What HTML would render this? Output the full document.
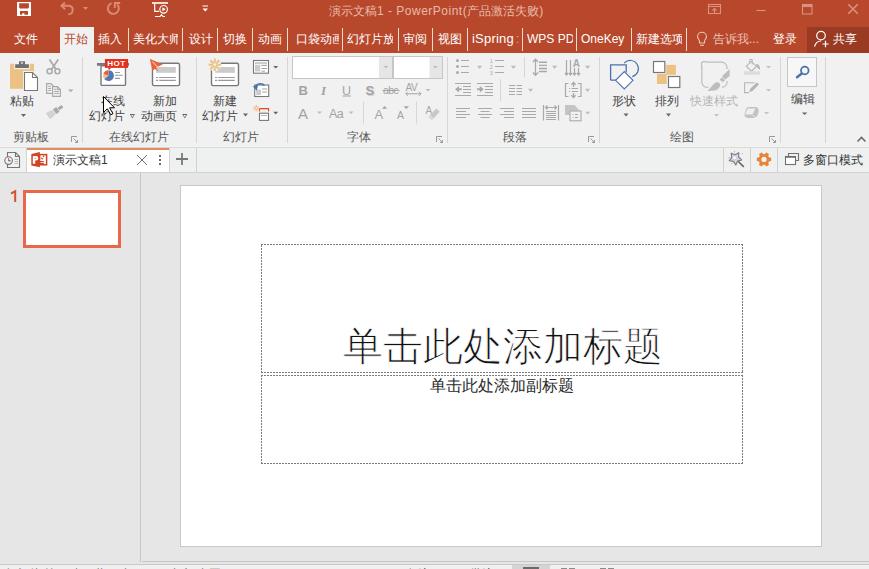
<!DOCTYPE html>
<html><head><meta charset="utf-8">
<style>
*{margin:0;padding:0;box-sizing:border-box}
html,body{width:869px;height:569px;overflow:hidden}
body{position:relative;background:#E6E6E6;font-family:"Liberation Sans",sans-serif;font-size:12px;line-height:16px;color:#444}
.a{position:absolute}
.t{position:absolute;white-space:nowrap;font-size:12px;line-height:16px}
.w{color:#fff}
.sep{position:absolute;width:1px;background:#D5D5D5}
.tsep{position:absolute;width:1px;top:28px;height:23px;background:#F0DBD3}
svg{position:absolute;overflow:visible}
</style></head><body>

<!-- ===== title bar + tabs ===== -->
<div class="a" style="left:0;top:0;width:869px;height:53px;background:#B8482C"></div>
<div class="a" style="left:60px;top:27px;width:34px;height:26px;background:#F1F1F1"></div>
<div class="a" style="left:807px;top:27px;width:62px;height:26px;background:#9B3A22"></div>

<div class="t" style="left:329px;top:3px;color:#E8BBAA">演示文稿<span style="letter-spacing:0.5px">1 - PowerPoint(</span>产品激活失败)</div>

<div class="t w" style="left:14px;top:31px">文件</div>
<div class="t" style="left:64px;top:31px;color:#B7472A">开始</div>
<div class="t w" style="left:98px;top:31px">插入</div>
<div class="tsep" style="left:128px"></div>
<div class="t w" style="left:133px;top:31px;width:45px;overflow:hidden">美化大师</div>
<div class="tsep" style="left:182px"></div>
<div class="t w" style="left:189px;top:31px">设计</div>
<div class="tsep" style="left:217px"></div>
<div class="t w" style="left:223px;top:31px">切换</div>
<div class="tsep" style="left:252px"></div>
<div class="t w" style="left:258px;top:31px">动画</div>
<div class="tsep" style="left:287px"></div>
<div class="t w" style="left:296px;top:31px;width:43px;overflow:hidden">口袋动画</div>
<div class="tsep" style="left:342px"></div>
<div class="t w" style="left:347px;top:31px;width:46px;overflow:hidden">幻灯片放映</div>
<div class="tsep" style="left:398px"></div>
<div class="t w" style="left:403px;top:31px">审阅</div>
<div class="tsep" style="left:432px"></div>
<div class="t w" style="left:438px;top:31px">视图</div>
<div class="tsep" style="left:467px"></div>
<div class="t w" style="left:472px;top:31px;font-size:13px;letter-spacing:0.2px">iSpring</div><div class="t" style="left:516px;top:31px;color:#E0A898">:</div>
<div class="tsep" style="left:522px"></div>
<div class="t w" style="left:527px;top:31px;width:46px;overflow:hidden">WPS PDF</div>
<div class="tsep" style="left:576px"></div>
<div class="t w" style="left:581px;top:31px">OneKey</div>
<div class="tsep" style="left:631px"></div>
<div class="t w" style="left:636px;top:31px;width:46px;overflow:hidden">新建选项卡</div>
<div class="tsep" style="left:686px"></div>
<div class="t" style="left:713px;top:31px;color:#EBC3B6">告诉我...</div>
<div class="t w" style="left:773px;top:31px">登录</div>
<div class="t w" style="left:833px;top:31px">共享</div>

<!-- ===== ribbon ===== -->
<div class="a" style="left:0;top:53px;width:869px;height:95px;background:#F1F1F1;border-bottom:1px solid #DADADA"></div>

<div class="sep" style="left:82px;top:57px;height:86px"></div>
<div class="sep" style="left:196px;top:57px;height:86px"></div>
<div class="sep" style="left:287px;top:57px;height:86px"></div>
<div class="sep" style="left:447px;top:57px;height:86px"></div>
<div class="sep" style="left:599px;top:57px;height:86px"></div>
<div class="sep" style="left:780px;top:57px;height:86px"></div>
<div class="sep" style="left:825px;top:57px;height:86px"></div>

<!-- group labels -->
<div class="t" style="left:13px;top:129px;color:#585858">剪贴板</div>
<div class="t" style="left:109px;top:129px;color:#585858">在线幻灯片</div>
<div class="t" style="left:223px;top:129px;color:#585858">幻灯片</div>
<div class="t" style="left:347px;top:129px;color:#585858">字体</div>
<div class="t" style="left:503px;top:129px;color:#585858">段落</div>
<div class="t" style="left:670px;top:129px;color:#585858">绘图</div>

<!-- big button labels -->
<div class="t" style="left:10px;top:93px">粘贴</div>
<div class="t" style="left:101px;top:93px">在线</div>
<div class="t" style="left:89px;top:108px">幻灯片</div>
<div class="t" style="left:153px;top:93px">新加</div>
<div class="t" style="left:141px;top:108px">动画页</div>
<div class="t" style="left:213px;top:93px">新建</div>
<div class="t" style="left:202px;top:108px">幻灯片</div>
<div class="t" style="left:612px;top:93px">形状</div>
<div class="t" style="left:655px;top:93px">排列</div>
<div class="t" style="left:690px;top:93px;color:#B5B5B5">快速样式</div>
<div class="t" style="left:791px;top:91px">编辑</div>

<!-- ===== doc tab bar ===== -->
<div class="a" style="left:0;top:148px;width:869px;height:25px;background:#EFF0F0;border-bottom:1px solid #D2D2D2"></div>
<div class="a" style="left:26px;top:148px;width:1px;height:24px;background:#D2D2D2"></div>
<div class="a" style="left:27px;top:148px;width:142px;height:24px;background:#fff;border-top:2px solid #E48A5F"></div>
<div class="a" style="left:169px;top:148px;width:1px;height:24px;background:#D2D2D2"></div>
<div class="a" style="left:196px;top:148px;width:1px;height:24px;background:#D2D2D2"></div>
<div class="t" style="left:53px;top:152px;color:#333">演示文稿1</div>
<div class="a" style="left:723px;top:148px;width:1px;height:24px;background:#D2D2D2"></div>
<div class="a" style="left:750px;top:148px;width:1px;height:24px;background:#D2D2D2"></div>
<div class="a" style="left:777px;top:148px;width:1px;height:24px;background:#D2D2D2"></div>
<div class="t" style="left:803px;top:152px;color:#333">多窗口模式</div>

<!-- ===== main area ===== -->
<div class="a" style="left:140px;top:173px;width:1px;height:389px;background:#C6C6C6"></div>
<div class="a" style="left:142px;top:561px;width:727px;height:1px;background:#C6C6C6"></div>
<svg style="left:0;top:180px" width="30" height="30"><path d="M11 13.6L15.2 11.2V22" fill="none" stroke="#D4502F" stroke-width="2"/></svg>
<div class="a" style="left:23px;top:190px;width:98px;height:58px;background:#fff;border:3px solid #E7694A"></div>

<div class="a" style="left:180px;top:185px;width:642px;height:362px;background:#fff;border:1px solid #C8C8C8"></div>
<svg style="left:0;top:0" width="869" height="569"><g fill="none" stroke="#7A7A7A" stroke-width="1" stroke-dasharray="2 1">
<path d="M261 244.5H743M742.5 244V373M743 372.5H261M261.5 373V244"/>
<path d="M261 375.5H743M742.5 375V464M743 463.5H261M261.5 464V375"/></g></svg>
<div class="t" style="left:343px;top:321px;font-size:40px;line-height:50px;color:#111;-webkit-text-stroke:0.9px #fff">单击此处添加标题</div>
<div class="t" style="left:430px;top:376px;font-size:16px;line-height:20px;color:#2A2A2A">单击此处添加副标题</div>


<!-- ===== icon layer ===== -->
<svg style="left:0;top:0" width="869" height="569" viewBox="0 0 869 569">
<!-- QAT -->
<path fill="#fff" fill-rule="evenodd" d="M17 2H31V16H17Z M19.2 3.2H28.9V7.8L28.1 8.6H20L19.2 7.8Z M20 11H28V14.7H24.4V13.3H22.2V14.7H20Z"/>
<g fill="none" stroke="#D98B76" stroke-width="1.9">
<path d="M61 5.8H69.3A4.3 4.3 0 0 1 68.3 14.3"/>
<path d="M65 2.5L61.4 5.8L65 9.2"/>
<path d="M111.6 3.2A5.5 5.5 0 1 0 117.3 4.5"/>
<path d="M114.8 8V3H120.2"/>
</g>
<path fill="#D98B76" d="M83 7H88L85.5 9.9Z"/>
<g fill="none" stroke="#fff" stroke-width="1.2">
<path d="M152 3H168" stroke-width="1.6"/>
<path d="M154.7 3.5V11.3H159"/>
<circle cx="163.6" cy="9.3" r="3.8"/>
<path d="M155 16.5H160L161.5 14.6L163 16.5H165"/>
</g>
<path fill="#fff" d="M162.4 7.3L165.7 9.3L162.4 11.3Z"/>
<path fill="#fff" d="M202.5 5.5H208V6.6H202.5Z M202.5 8.4H208L205.25 11.5Z"/>
<!-- window buttons -->
<g fill="none" stroke="#D99180" stroke-width="1.1">
<rect x="708.5" y="4.5" width="12" height="9"/>
<path d="M709 6.5H720 M714.5 13V8.5 M712.5 10.5L714.5 8.5L716.5 10.5"/>
<path d="M756.5 10.5H765.5"/>
<rect x="802.5" y="4.5" width="9.5" height="9.5"/>
<path d="M802.5 5.8H812" stroke-width="2.5"/>
<path d="M848.3 4.3L857.7 13.7M857.7 4.3L848.3 13.7" stroke-width="1.6"/>
</g>
<!-- tell me bulb -->
<g fill="none" stroke="#F0C4B6" stroke-width="1.1">
<path d="M699.5 43V41.5C699.5 39.5 697.5 38.5 697.5 36.7A4.5 4.5 0 0 1 706.5 36.7C706.5 38.5 704.5 39.5 704.5 41.5V43Z"/>
<path d="M700 45.3H704"/>
</g>
<!-- share user -->
<g fill="none" stroke="#fff" stroke-width="1.2">
<circle cx="821" cy="35.6" r="4.3"/>
<path d="M814.5 46.7C815.5 42.8 818 41 821 41"/>
<path d="M822.5 44H828.6M825.5 40.8V47.2"/>
</g>

<!-- ===== clipboard group ===== -->
<rect x="10" y="63.8" width="24" height="25" fill="#EBC283"/>
<path d="M14.2 63H29.8V69.2H14.2Z" fill="#F1F1F1"/>
<path d="M15.2 64.2H28.9V68H15.2Z M19 61.2H25V64.5H19Z" fill="#707070"/>
<circle cx="22" cy="63" r="0.9" fill="#F1F1F1"/>
<path d="M23 71H33L39 77V92H23Z" fill="#F1F1F1"/>
<path d="M24.5 72.5H32.5L37.5 77.5V90.5H24.5Z" fill="#fff" stroke="#777" stroke-width="1.1"/>
<path d="M32.5 72.5V77.5H37.5" fill="none" stroke="#777" stroke-width="1.1"/>
<g fill="none" stroke="#A9A9A9" stroke-width="1.3">
<path d="M49.5 59.5L56 69.2M58.2 59.5L51.7 69.2" stroke-width="1.7"/>
<circle cx="49.6" cy="71.3" r="2.5" stroke-width="1.5"/>
<circle cx="57.4" cy="71.3" r="2.5" stroke-width="1.5"/>
<path d="M46.6 83.6H51L53 85.6V93.4H46.6Z" fill="#F1F1F1" stroke-width="1.2"/>
<path d="M52.6 86.6H57.5L60.4 89.5V96.4H52.6Z" fill="#F1F1F1" stroke-width="1.2"/>
<path d="M48.2 86.3H51M48.2 88.5H51M48.2 90.5H51M54.2 89.3H56.5M54.2 91.4H59M54.2 93.4H59" stroke-width="1"/>
<path d="M57.5 86.6V89.5H60.4" stroke-width="1"/>
</g>
<path d="M68 89.5H73.5L70.75 92.3Z" fill="#A9A9A9"/>
<path d="M59.3 110.2L63.3 107.4L61.7 105.0L57.6 107.7Z" fill="#A9A9A9"/>
<path d="M56.2 113.9L59.5 111.7L56.3 107.1L53.0 109.3Z" fill="#A9A9A9"/>
<path d="M50.0 119.3L55.7 114.2L52.5 109.7L45.8 113.1Z" fill="#D2D2D2"/>
<path d="M21 114H26L23.5 117Z" fill="#666"/>
<!-- launcher -->
<g fill="none" stroke="#9A9A9A" stroke-width="1">
<path d="M71.5 142V136.5H77M73.5 138.5L77.5 142.5M75 142.5H77.5V140"/>
<path d="M436.5 142V136.5H442M438.5 138.5L442.5 142.5M440 142.5H442.5V140"/>
<path d="M588.5 142V136.5H594M590.5 138.5L594.5 142.5M592 142.5H594.5V140"/>
<path d="M769.5 142V136.5H775M771.5 138.5L775.5 142.5M773 142.5H775.5V140"/>
</g>
<!-- collapse -->
<path d="M857.5 141.5L861.5 137.5L865.5 141.5" fill="none" stroke="#6A6A6A" stroke-width="1.6"/>

<!-- ===== online slides ===== -->
<rect x="97" y="63" width="32" height="2.8" fill="#7A7A7A"/>
<rect x="101" y="65.8" width="24.5" height="19.6" rx="1" fill="#fff" stroke="#787878" stroke-width="1.4"/>
<rect x="104.9" y="59" width="23.2" height="8.9" fill="#E2321D"/>
<path d="M108 67.9H111L109 70Z" fill="#E2321D"/>
<text x="116.5" y="66.4" font-family="Liberation Sans" font-weight="bold" font-size="8" fill="#fff" text-anchor="middle" letter-spacing="0.6">HOT</text>
<path d="M108.5 75.6L108.5 70.2A5.4 5.4 0 1 1 104.3 79Z" fill="#5079B2"/>
<path d="M108.5 75.6L104.3 79A5.4 5.4 0 0 1 103.3 74.1Z" fill="#EBC283"/>
<path d="M108.5 75.6L103.3 74.1A5.4 5.4 0 0 1 108.5 70.2Z" fill="#D9634A"/>
<path d="M115 72.5H120M115 75.3H122.8M115 78.4H120" stroke="#9A9A9A" stroke-width="1.1"/>
<!-- new animation page -->
<rect x="152.5" y="63.3" width="27" height="22.3" rx="1.6" fill="#fff" stroke="#787878" stroke-width="1.4"/>
<rect x="156" y="67" width="19.8" height="5.8" fill="#CBCBCB"/>
<path d="M156 77.5H158.2M159.3 77.5H175.8M156 80.4H158.2M159.3 80.4H175.8" stroke="#9A9A9A" stroke-width="1.1"/>
<path d="M149.8 58.8L162.8 64.5L156 67.5L158.6 71.6L155 69L152.4 70.6Z" fill="#E8643C"/>
<path d="M152.3 61.5L157.5 67" stroke="#fff" stroke-width="0.8"/>
<!-- new slide -->
<rect x="211.5" y="63.3" width="27" height="22.3" rx="1.6" fill="#fff" stroke="#787878" stroke-width="1.4"/>
<rect x="215.2" y="67" width="19.6" height="5.8" fill="#CBCBCB"/>
<path d="M215 77.5H217.2M218.2 77.5H234.8M215 80.4H217.2M218.2 80.4H234.8" stroke="#9A9A9A" stroke-width="1.1"/>
<circle cx="214.8" cy="64.8" r="6.5" fill="#F1F1F1"/>
<g stroke="#EBC283" stroke-width="2">
<path d="M214.8 58.5V62.2M214.8 67.4V71.1M208.5 64.8H212.2M217.4 64.8H221.1M210.3 60.3L212.9 62.9M216.7 66.7L219.3 69.3M219.3 60.3L216.7 62.9M212.9 66.7L210.3 69.3"/>
</g>
<circle cx="214.8" cy="64.8" r="2.1" fill="none" stroke="#EBC283" stroke-width="1.3"/>
<!-- layout/reset/section -->
<rect x="253.5" y="60.5" width="15" height="12.7" fill="#fff" stroke="#787878" stroke-width="1.1"/>
<path d="M255 62H267V64.2H255Z M255 65H260.3V71.6H255Z" fill="#CBCBCB"/>
<path d="M261.5 65.5H267M261.5 68.5H267M261.5 71.2H265" stroke="#9A9A9A" stroke-width="0.9"/>
<path d="M273.2 66H278.2L275.7 68.6Z" fill="#666"/>
<rect x="254.7" y="85" width="14" height="11.5" fill="#fff" stroke="#787878" stroke-width="1.1"/>
<path d="M256.2 89.5H261V95H256.2Z" fill="#CBCBCB"/>
<path d="M262 89H267.2M262 92H267.2" stroke="#9A9A9A" stroke-width="0.9"/>
<path d="M255.5 88.5A5 4.5 0 0 1 264.5 85.6" fill="none" stroke="#4A72AC" stroke-width="1.6"/>
<path d="M252.8 86.3L256.8 90.8L258 85.4Z" fill="#4A72AC"/>
<rect x="259.5" y="113.2" width="9" height="7.2" fill="#fff" stroke="#787878" stroke-width="1.1"/>
<path d="M261 115.5H267" stroke="#BBB" stroke-width="1"/>
<path d="M259.5 111.6V108.6H268.6V111.6" fill="none" stroke="#E2491F" stroke-width="1.1"/>
<g stroke="#EBC283" stroke-width="1"><path d="M256.3 104.8V111.6M252.9 108.2H259.7M254 105.9L258.6 110.5M258.6 105.9L254 110.5"/></g>
<circle cx="256.3" cy="108.2" r="1.3" fill="#F1F1F1" stroke="#EBC283" stroke-width="0.9"/>
<path d="M273.2 111.8H278.2L275.7 114.4Z" fill="#666"/>
<!-- big button dropdown arrows -->
<path d="M621.5 113.5H630.5L626 117.2Z" transform="translate(0,0) scale(1)" fill="#666" style="display:none"/>
</svg>


<svg style="left:0;top:0" width="869" height="569" viewBox="0 0 869 569">
<!-- dropdown arrows big buttons -->
<g fill="#666">
<path d="M129.8 114H135L132.4 118.5Z"/>
<path d="M182.2 114H187.4L184.8 118.5Z"/>
<path d="M243 113.5H248L245.5 116.5Z"/>
<path d="M623.5 113.5H628.5L626 116.5Z"/>
<path d="M666 113.5H671L668.5 116.5Z"/>
<path d="M802 112.5H807.3L804.65 115Z"/>
</g>
<path d="M131.2 115H133.6L132.4 117.2Z" fill="#F1F1F1"/>
<path d="M183.6 115H186L184.8 117.2Z" fill="#F1F1F1"/>
<path d="M714 114H719L716.5 116.8Z" fill="#C4C4C4"/>

<!-- ===== font group ===== -->
<rect x="292.5" y="56.5" width="100" height="22" fill="#fff" stroke="#C6C6C6"/>
<rect x="379" y="57" width="13" height="21" fill="#E6E6E6"/>
<rect x="393.5" y="56.5" width="49" height="22" fill="#fff" stroke="#C6C6C6"/>
<rect x="429.5" y="57" width="12.5" height="21" fill="#E6E6E6"/>
<path d="M383.5 66H388.2L385.85 68.6Z M433 66H437.7L435.35 68.6Z" fill="#BEBEBE"/>
<g fill="#A3A3A3" font-family="Liberation Sans">
<text x="298.5" y="94.5" font-size="13" font-weight="bold">B</text>
<text x="321" y="94.5" font-size="13" font-style="italic" font-weight="bold" font-family="Liberation Serif">I</text>
<text x="342" y="94.5" font-size="12.5">U</text>
<text x="366.5" y="95.5" font-size="13" font-weight="bold" fill="#D0D0D0">S</text><text x="365.5" y="94.5" font-size="13" font-weight="bold">S</text>
<text x="383" y="94" font-size="10.5" letter-spacing="-0.6">abc</text>
<text x="405.5" y="91" font-size="10" letter-spacing="-0.4">AV</text>
<text x="298" y="118.5" font-size="15">A</text>
<text x="329" y="117.5" font-size="12.5" letter-spacing="-0.5">Aa</text>
<text x="374.5" y="118.5" font-size="13">A</text>
<text x="397" y="119" font-size="10.5">A</text>
</g>
<path d="M342.5 96H351" stroke="#A3A3A3" stroke-width="1"/>
<path d="M382.5 90.5H399.5" stroke="#A3A3A3" stroke-width="1"/>
<path d="M405.8 93.8H421M407.8 91.8L405.8 93.8L407.8 95.8M419 91.8L421 93.8L419 95.8" fill="none" stroke="#A3A3A3" stroke-width="1"/>
<g fill="#BDBDBD">
<path d="M425.5 89H430.5L428 91.5Z"/>
<path d="M317 111.5H322L319.5 114Z"/>
<path d="M348.5 111.5H353.5L351 114Z"/>
<path d="M382 108.7L384.6 106L387.2 108.7Z" fill="#A3A3A3"/>
<path d="M403.6 106.3L409 106.3L406.3 109Z" fill="#A3A3A3"/>
</g>
<path d="M363.5 102V123.5M416.5 102V123.5" stroke="#D5D5D5" stroke-width="1"/>
<text x="425.6" y="113.8" font-size="10" fill="#A8A8A8" font-family="Liberation Sans">A</text>
<path d="M430 115L436.3 108.4L439.8 111.8L433.5 118.4Z" fill="#C8C8C8"/>
<path d="M428.4 116.8L430 115.2L433.4 118.6L431.8 120.2Z" fill="#D6D6D6"/>

<!-- ===== paragraph group ===== -->
<g fill="#A9A9A9">
<circle cx="457.5" cy="60.5" r="1.5"/><circle cx="457.5" cy="66.5" r="1.5"/><circle cx="457.5" cy="72.5" r="1.5"/>
</g>
<g stroke="#A9A9A9" stroke-width="1.2" fill="none">
<path d="M461 60.5H469M461 66.5H469M461 72.5H469"/>
<path d="M495 60.5H504M495 66.5H504M495 72.5H504"/>
<path d="M535.5 59.5V75" />
<path d="M533 62L535.5 59.3L538 62M533 72.5L535.5 75.2L538 72.5" stroke-width="1.4"/>
<path d="M539 62.3H547M539 65.4H547M539 68.5H547M539 71.5H547" stroke-width="1.4"/>
<path d="M566.5 60V75M570.5 60V75M574.5 68V75M578.5 68V75"/>
<path d="M565 73L566.5 75L568 73M569 73L570.5 75L572 73M573 73L574.5 75L576 73M577 73L578.5 75L580 73" stroke-width="1.3"/>
<path d="M455 83.5H471M463 86.5H471M463 89.5H471M463 92.5H471M455 95.5H471"/>
<path d="M477 83.5H493M485 86.5H493M485 89.5H493M485 92.5H493M477 95.5H493"/>
<path d="M509 85.5H515M516.5 85.5H522M509 88.5H515M516.5 88.5H522M509 91.5H515M516.5 91.5H522M509 94.5H515M516.5 94.5H522"/>
<path d="M568.5 83.5H565.5V96.5H568.5M578 83.5H581V96.5H578"/>
<path d="M573.5 82.5V87M571.3 84.7L573.5 82.5L575.7 84.7M573.5 93V97.5M571.3 95.3L573.5 97.5L575.7 95.3" stroke-width="1.3"/>
<path d="M569 88.5H570M571.5 88.5H578M569 91.5H570M571.5 91.5H578"/>
<path d="M456 108.5H470M456 111.5H466M456 114.5H470M456 117.5H466"/>
<path d="M478 108.5H492M480.5 111.5H489.5M478 114.5H492M480.5 117.5H489.5"/>
<path d="M500 108.5H514M504 111.5H514M500 114.5H514M504 117.5H514"/>
<path d="M522 108.5H536M522 111.5H536M522 114.5H536M522 117.5H536"/>
<path d="M543.5 105V120.5M558.5 105V120.5M546 111.5H556M546 113.5H556M546 115.5H556M546 117.5H556M546 119.5H556"/>
<path d="M545.5 107.5H556.5M547.5 105.5L545.5 107.5L547.5 109.5M554.5 105.5L556.5 107.5L554.5 109.5"/>
</g>
<path d="M455 89.2L459 86V88.2H461.7V90.2H459V92.4Z" fill="#A9A9A9"/>
<path d="M483.8 89.2L479.8 86V88.2H477.1V90.2H479.8V92.4Z" fill="#A9A9A9"/>
<text x="489.7" y="63" font-size="5.5" fill="#A9A9A9" font-family="Liberation Sans">1</text>
<text x="489.7" y="69" font-size="5.5" fill="#A9A9A9" font-family="Liberation Sans">2</text>
<text x="489.7" y="75" font-size="5.5" fill="#A9A9A9" font-family="Liberation Sans">3</text>
<text x="572.8" y="66.8" font-size="10" font-weight="bold" fill="#A9A9A9" font-family="Liberation Sans">A</text>
<path d="M524.5 57V77.5M500.5 79V101" stroke="#D5D5D5" stroke-width="1"/>
<path d="M565 105H574.5L579.7 110.8H569.7V115H565Z" fill="#C4C4C4"/>
<rect x="570" y="111" width="11" height="9.8" fill="#F1F1F1" stroke="#A9A9A9" stroke-width="1.1"/>
<path d="M572.5 114.5H573.5M572.5 117.5H573.5M575 114.5H578M575 117.5H578" stroke="#A9A9A9" stroke-width="1"/>
<g fill="#BDBDBD">
<path d="M477 65.7H482.2L479.6 68.9Z"/><path d="M510.8 65.7H516L513.4 68.9Z"/>
<path d="M552 65.7H557.2L554.6 68.9Z"/><path d="M585 65.7H590.2L587.6 68.9Z"/>
<path d="M528 88.8H533.2L530.6 92Z"/><path d="M585 88.8H590.2L587.6 92Z"/>
<path d="M585.2 111.8H590.2L587.7 114.6Z"/>
</g>

<!-- ===== drawing group ===== -->
<path d="M624.2 63.1A8.2 8.2 0 1 1 632.3 76.6" fill="none" stroke="#4A72AC" stroke-width="1.2"/>
<path d="M610.6 80.2V64.8H626.2V72.5M610.6 80.2H616.5" fill="none" stroke="#4A72AC" stroke-width="1.3"/>
<path d="M624.3 71.6L633 80.3L624.3 89L615.6 80.3Z" fill="#fff" stroke="#4A72AC" stroke-width="1.1"/>
<rect x="666.2" y="64.9" width="9.7" height="9.9" fill="#EBC283"/>
<rect x="657" y="73.9" width="9.7" height="10.1" fill="#EBC283"/>
<rect x="653.5" y="61.5" width="11.3" height="11" fill="#fff" stroke="#777" stroke-width="1.2"/>
<rect x="668.5" y="76.5" width="11.3" height="11" fill="#fff" stroke="#777" stroke-width="1.2"/>
<path d="M701.6 68.5V62.5A5.5 5.5 0 0 1 707 62.2H721.5A5.5 5.5 0 0 1 727 67.7V69" fill="none" stroke="#BDBDBD" stroke-width="1.2"/>
<path d="M701.8 67V82A5.5 5.5 0 0 0 707.3 87.4H708.3M722 87.4A5.5 5.5 0 0 0 727 82V81" fill="none" stroke="#BDBDBD" stroke-width="1.2"/>
<path d="M701.8 67V62.5" stroke="#F1F1F1" stroke-width="0"/>
<path d="M729.6 69V76L725.2 79.6L722 76.2Z" fill="#BDBDBD"/>
<path d="M722 77.3L725 79.9L723 82.3L719.6 79.8Z" fill="#BDBDBD"/>
<path d="M707.5 90.9L714.5 83.3C716.4 81.7 719.5 82 720.2 84.6C720.5 86.5 718.3 89.6 715.1 90.6Z" fill="#BDBDBD"/>
<path d="M746.3 66.2L751.3 61.4L756.5 66.4L751.4 71.2Z" fill="#F1F1F1" stroke="#B5B5B5" stroke-width="1.1"/>
<path d="M749.8 63V59.5H752.2V64.5" fill="none" stroke="#B5B5B5" stroke-width="1"/>
<path d="M756 64C758.5 64 760.3 66 760 69.8L757.5 68Z" fill="#B5B5B5"/>
<rect x="744.1" y="71.3" width="15.9" height="3.5" fill="#DCDCDC"/>
<path d="M754.5 82.8H744.6V92.6H749" fill="none" stroke="#B5B5B5" stroke-width="1.1"/>
<path d="M749.2 92.2L750.3 88.8L756.8 82.3L759 84.5L752.5 91Z" fill="#B5B5B5"/>
<path d="M744.6 113.5C744 115.5 745 117.9 748 117.9H753.5C755.5 117.9 756.8 116.8 757.8 114.5L758.5 112C759 109.5 758 107.1 755.5 107.1H749C747.3 107.1 746.5 108 746 109.2Z" fill="#C2C2C2"/>
<path d="M747.6 108.4H755.4L752.5 114.6H745Z" fill="#EFEFEF"/>
<path d="M752.6 114.8L755.2 117.6" stroke="#F4F4F4" stroke-width="0.8"/>
<g fill="#C4C4C4">
<path d="M765.9 66H771.2L768.55 68.6Z"/><path d="M765.9 89H771.2L768.55 91.6Z"/><path d="M764 112H769.2L766.6 114.5Z"/>
</g>
<!-- edit -->
<rect x="787.5" y="57.5" width="29" height="29" fill="#F7F7F7" stroke="#C6C6C6"/>
<circle cx="804.8" cy="70.5" r="3.8" fill="none" stroke="#4A72AC" stroke-width="1.8"/>
<path d="M801.8 73.5L797 77.3" stroke="#4A72AC" stroke-width="2.4" stroke-linecap="round"/>

<!-- ===== doc tab bar icons ===== -->
<path d="M7.5 152.5H15.5L19.5 156.5V167.5H7.5Z" fill="#F1F2F2" stroke="#757575" stroke-width="1.1"/>
<path d="M15.5 152.5V156.5H19.5" fill="none" stroke="#757575" stroke-width="1.1"/>
<path d="M14.5 159.5H18M14.5 161.5H18M14.5 163.5H18" stroke="#AAA" stroke-width="0.8"/>
<circle cx="8.6" cy="160.6" r="3.8" fill="#F1F2F2" stroke="#757575" stroke-width="1.1"/>
<path d="M8.6 158V160.8H10.5" fill="none" stroke="#D9452B" stroke-width="0.9"/>
<path d="M8.6 160.8H10.5" stroke="#3A6FC4" stroke-width="0.9"/>
<rect x="39.6" y="154.6" width="7" height="10.2" fill="#fff" stroke="#D04423" stroke-width="1.5"/>
<path d="M31.3 153.9L39.9 152.1V167.2L31.3 165.5Z" fill="#D04423"/>
<path d="M32.8 163.8V156H36A2.3 2.3 0 0 1 36 160.6H35.2V163.8Z" fill="#fff"/>
<path d="M34.8 157.9H35.8A0.8 0.8 0 0 1 35.8 158.8H34.8Z" fill="#D04423"/>
<path d="M39.8 161.5H43.8M39.8 163.4H43.8" stroke="#D04423" stroke-width="1.1"/>
<path d="M40.5 157.3L43.5 158.4L42 159.8Z" fill="#D04423"/>
<circle cx="43.6" cy="156.4" r="0.8" fill="#D04423"/>
<path d="M137 155L147 165M147 155L137 165" stroke="#707070" stroke-width="1"/>
<rect x="159" y="155" width="2" height="2" fill="#666"/><rect x="159" y="159" width="2" height="2" fill="#666"/><rect x="159" y="163" width="2" height="2" fill="#666"/>
<path d="M176 159H188M182 153V165" stroke="#777" stroke-width="1.8"/>
<!-- wand -->
<path d="M738.8 152.7L738.6 157.0L741.7 159.9L737.6 161.1L735.8 164.9L733.4 161.4L729.2 160.8L731.8 157.4L731.1 153.2L735.0 154.7Z" fill="#D8D1E3" stroke="#7C7C7C" stroke-width="1.1" stroke-linejoin="round"/>
<path d="M738.3 161.5L743.8 166.8" stroke="#6A6A6A" stroke-width="1.7"/>
<circle cx="734.5" cy="157.8" r="1.3" fill="#fff"/>
<path d="M734.4 151.2V152.4M741.5 154.2L742.5 153.2M728.5 157.7H729.6M731.5 163.7L732.5 163.3" stroke="#8A8A8A" stroke-width="0.8"/>
<!-- gear -->
<g fill="#E8843A">
<circle cx="764" cy="159.4" r="5.4"/>
<rect x="756.8" y="157.6" width="14.4" height="3.6" rx="0.8"/>
<rect x="756.8" y="157.6" width="14.4" height="3.6" rx="0.8" transform="rotate(60 764 159.4)"/>
<rect x="756.8" y="157.6" width="14.4" height="3.6" rx="0.8" transform="rotate(120 764 159.4)"/>
</g>
<circle cx="764" cy="159.4" r="2.6" fill="#F0F1F1"/>
<!-- window -->
<path d="M788.5 156V153.5H798.5V160.5H796" fill="#F1F2F2" stroke="#707070" stroke-width="1.1"/>
<rect x="785.5" y="156.5" width="10" height="8" fill="#fff" stroke="#707070" stroke-width="1.1"/>
<path d="M785.5 157H795.5" stroke="#707070" stroke-width="1.6"/>

<!-- cursor -->
<path d="M103.5 96.5V112.5L107.3 108.8L110.8 114.8L113 113.6L109.6 107.8H114.5Z" fill="#fff" stroke="#000" stroke-width="1" stroke-linejoin="miter"/>
</svg>

<!-- status bar -->
<div class="a" style="left:0;top:564px;width:869px;height:5px;background:#F0F0F0;border-top:1px solid #C9C9C9"></div>
<div class="a" style="left:512px;top:565px;width:38px;height:4px;background:#D4D4D4"></div>
<div class="t" style="left:5px;top:566px;color:#555">幻灯片 第 1 张，共 1 张</div>
<div class="t" style="left:169px;top:566px;color:#555">中文(中国)</div>
<div class="t" style="left:406px;top:566px;color:#555">备注</div>
<div class="t" style="left:470px;top:566px;color:#555">批注</div>
<div class="a" style="left:523px;top:567px;width:16px;height:2px;background:#6A6A6A"></div>
<div class="a" style="left:561px;top:568px;width:6px;height:1px;background:#8A8A8A"></div>
<div class="a" style="left:569px;top:568px;width:6px;height:1px;background:#8A8A8A"></div>
<div class="a" style="left:600px;top:568px;width:6px;height:1px;background:#8A8A8A"></div>
<div class="a" style="left:608px;top:568px;width:6px;height:1px;background:#8A8A8A"></div>

</body></html>
